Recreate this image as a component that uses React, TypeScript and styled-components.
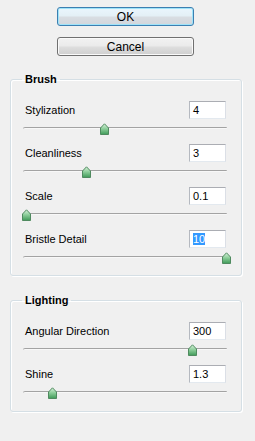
import React from "react";
import styled, { createGlobalStyle } from "styled-components";

const Global = createGlobalStyle`
  html, body { margin: 0; padding: 0; background: #f0f0f0; }
  body { font-family: "Liberation Sans", Arial, sans-serif; font-size: 11px; color: #000; }
`;

const Page = styled.div`
  width: 255px;
  height: 441px;
  box-sizing: border-box;
  padding-top: 7px;
  display: flex;
  flex-direction: column;
  background: #f0f0f0;
`;

const ButtonColumn = styled.div`
  display: flex;
  flex-direction: column;
  align-items: flex-start;
  padding-left: 57px;
  gap: 11px;
`;

const Button = styled.button<{ $default?: boolean }>`
  width: 137px;
  height: 19px;
  box-sizing: border-box;
  padding: 0;
  margin: 0;
  font-family: "Liberation Sans", Arial, sans-serif;
  font-size: 12px;
  color: #000;
  border-radius: 3px;
  border: 1px solid ${(p) => (p.$default ? "#3c7fb1" : "#707070")};
  background: ${(p) =>
    p.$default
      ? "linear-gradient(#eaf6fd 0%, #e4f0f6 45%, #d8dde2 55%, #d2d6dc 100%)"
      : "linear-gradient(#f2f2f2 0%, #ebebeb 45%, #dddddd 55%, #cfcfcf 100%)"};
  box-shadow: inset 0 0 0 1px ${(p) => (p.$default ? "#9fe3f9" : "#fafafa")};
  display: flex;
  align-items: center;
  justify-content: center;
`;

const Group = styled.fieldset<{ $bottom: number }>`
  margin: 0 13px 0 10px;
  padding: 15px 14px ${(p) => p.$bottom}px 13px;
  border: 1px solid #d5dfe5;
  border-radius: 3px;
  min-width: 0;
  display: flex;
  flex-direction: column;
  gap: 8px;
  box-shadow: 1px 1px 0 #ffffff inset, 1px 1px 0 #ffffff;
`;

const GroupTitle = styled.legend`
  margin-left: -2px;
  padding: 0 3px;
  font-weight: bold;
  font-size: 11px;
  line-height: 13px;
`;

const Row = styled.div`
  display: flex;
  flex-direction: column;
`;

const RowHeader = styled.div`
  display: flex;
  align-items: center;
  justify-content: space-between;
  height: 18px;
`;

const Label = styled.span`
  font-size: 11px;
  padding-left: 1px;
`;

const Field = styled.div`
  width: 37px;
  height: 18px;
  box-sizing: border-box;
  border: 1px solid #b5b9c0;
  border-top-color: #abadb3;
  border-bottom-color: #e3e9ef;
  border-right-color: #dbdfe6;
  background: #fff;
  font-size: 11px;
  line-height: 16px;
  padding-left: 3px;
  margin-right: 1px;
`;

const Selected = styled.span`
  background: #3399ff;
  color: #fff;
`;

const Slider = styled.div`
  position: relative;
  height: 12px;
  margin-top: 5px;
`;

const Track = styled.div`
  position: absolute;
  left: 0;
  right: 0;
  top: 3px;
  height: 2px;
  border-radius: 1px;
  border-top: 1px solid #a3a3a3;
  background: #f8f8f8;
  box-sizing: border-box;
  box-shadow: -1px 0 0 #c8c8c8;
`;

const Thumb = styled.svg`
  position: absolute;
  top: -1px;
  width: 9px;
  height: 12px;
`;

type SliderRowProps = { label: string; value: string; offset: number; selected?: boolean };

const SliderRow = ({ label, value, offset, selected }: SliderRowProps) => (
  <Row>
    <RowHeader>
      <Label>{label}</Label>
      <Field>{selected ? <Selected>{value}</Selected> : value}</Field>
    </RowHeader>
    <Slider>
      <Track />
      <Thumb viewBox="0 0 9 12" style={{ left: offset - 4 }}>
        <defs>
          <linearGradient id="tg" x1="0" y1="0" x2="0" y2="1">
            <stop offset="0" stopColor="#d9f2dc" />
            <stop offset="0.45" stopColor="#8fcf9c" />
            <stop offset="1" stopColor="#3f9a58" />
          </linearGradient>
        </defs>
        <path d="M0.5 5 L4.5 0.8 L8.5 5 L8.5 11.5 L0.5 11.5 Z" fill="url(#tg)" stroke="#4f8a5f" strokeWidth="1" />
      </Thumb>
    </Slider>
  </Row>
);

const Spacer = styled.div<{ $h: number }>`
  height: ${(p) => p.$h}px;
  flex: none;
`;

export default function App() {
  return (
    <Page>
      <Global />
      <ButtonColumn>
        <Button $default>OK</Button>
        <Button>Cancel</Button>
      </ButtonColumn>
      <Spacer $h={17} />
      <Group $bottom={10}>
        <GroupTitle>Brush</GroupTitle>
        <SliderRow label="Stylization" value="4" offset={80} />
        <SliderRow label="Cleanliness" value="3" offset={62} />
        <SliderRow label="Scale" value="0.1" offset={2} />
        <SliderRow label="Bristle Detail" value="10" offset={202} selected />
      </Group>
      <Spacer $h={18} />
      <Group $bottom={11}>
        <GroupTitle>Lighting</GroupTitle>
        <SliderRow label="Angular Direction" value="300" offset={168} />
        <SliderRow label="Shine" value="1.3" offset={28} />
      </Group>
    </Page>
  );
}
